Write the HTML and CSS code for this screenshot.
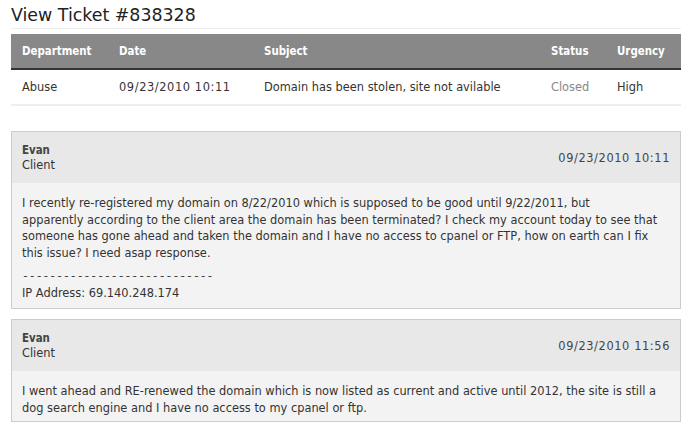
FILE: index.html
```html
<!DOCTYPE html>
<html>
<head>
<meta charset="utf-8">
<link rel="stylesheet" href="styles.css">
</head>
<body>
<div class="page">
  <h1 class="title">View Ticket #838328</h1>
  <table class="ticket">
    <thead>
      <tr>
        <th class="c-dept">Department</th>
        <th class="c-date">Date</th>
        <th class="c-subj">Subject</th>
        <th class="c-status">Status</th>
        <th class="c-urg">Urgency</th>
      </tr>
    </thead>
    <tbody>
      <tr>
        <td>Abuse</td>
        <td class="num">09/23/2010 10:11</td>
        <td>Domain has been stolen, site not avilable</td>
        <td class="closed">Closed</td>
        <td>High</td>
      </tr>
    </tbody>
  </table>

  <div class="msg msg-first">
    <div class="msg-head">
      <div class="who"><strong>Evan</strong><span>Client</span></div>
      <div class="when num">09/23/2010 10:11</div>
    </div>
    <div class="msg-body">
      <p>I recently re-registered my domain on 8/22/2010 which is supposed to be good until 9/22/2011, but<br>apparently according to the client area the domain has been terminated? I check my account today to see that<br>someone has gone ahead and taken the domain and I have no access to cpanel or FTP, how on earth can I fix<br>this issue? I need asap response.</p>
      <p class="sig"><span class="dashes">----------------------------</span><br>IP Address: 69.140.248.174</p>
    </div>
  </div>

  <div class="msg msg-second">
    <div class="msg-head">
      <div class="who"><strong>Evan</strong><span>Client</span></div>
      <div class="when num">09/23/2010 11:56</div>
    </div>
    <div class="msg-body">
      <p>I went ahead and RE-renewed the domain which is now listed as current and active until 2012, the site is still a dog search engine and I have no access to my cpanel or ftp.</p>
    </div>
  </div>
</div>
</body>
</html>
```
FILE: styles.css
```css
html, body {
  margin: 0;
  padding: 0;
  background: #fff;
}
body {
  font-family: "DejaVu Sans", Verdana, sans-serif;
  font-size: 11.4px;
  color: #333;
}
.page {
  width: 670px;
  padding: 0 0 0 11px;
}
.title {
  margin: 0;
  padding: 4px 0 2px 0;
  font-size: 17.4px;
  font-weight: normal;
  line-height: 22px;
  color: #222;
  border-bottom: 1px solid #eee;
}
.ticket {
  width: 100%;
  margin-top: 5px;
  border-collapse: collapse;
}
.ticket th {
  background: #888;
  color: #fff;
  font-family: "DejaVu Sans Condensed", "DejaVu Sans", sans-serif;
  font-stretch: semi-condensed;
  font-weight: bold;
  text-align: left;
  height: 34px;
  padding: 0 0 0 11px;
  border-bottom: 2px solid #333;
}
.ticket td {
  height: 34px;
  padding: 0 0 0 11px;
  border-bottom: 2px solid #eee;
}
.c-dept { width: 86px; }
.c-date { width: 134px; }
.c-subj { width: 276px; }
.c-status { width: 55px; }
.closed { color: #888; }
.num { letter-spacing: 0.6px; }
.msg {
  border: 1px solid #ccc;
  background: #f3f3f3;
}
.msg-first { margin-top: 25px; }
.msg-second { margin-top: 10px; }
.msg-head {
  display: flex;
  justify-content: space-between;
  align-items: center;
  background: #e8e8e8;
  padding: 10px 10px 10px 10px;
  height: 31px;
}
.who {
  display: flex;
  flex-direction: column;
  line-height: 15px;
}
.who strong {
  color: #444;
  font-family: "DejaVu Sans Condensed", "DejaVu Sans", sans-serif;
  font-stretch: semi-condensed;
}
.when { color: #444; }
.msg-body {
  padding: 12px 10px 5px 10px;
  line-height: 16.5px;
}
.msg-first .msg-body { padding-bottom: 7px; }
.msg-body p { margin: 0; }
.msg-body .sig { margin-top: 6px; }
.dashes {
  font-family: "Liberation Mono", monospace;
  font-size: 11.4px;
}
```
